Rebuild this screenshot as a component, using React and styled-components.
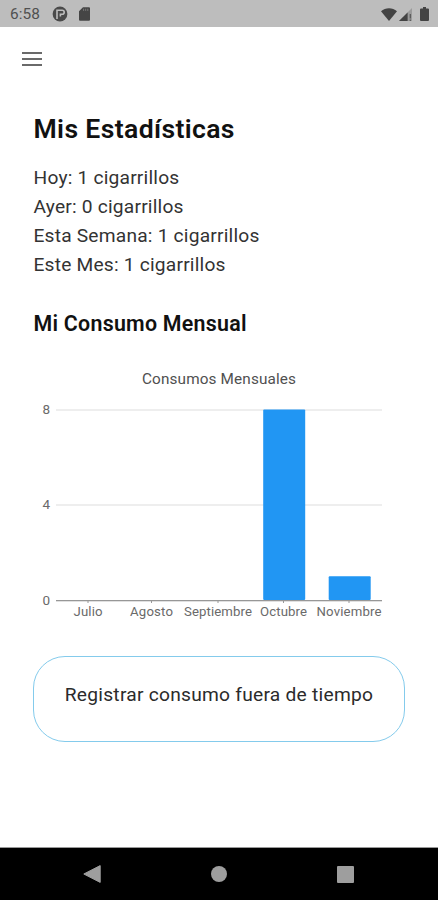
import React from 'react'
import styled, { createGlobalStyle } from 'styled-components'

const stats = [
  { label: 'Hoy', count: 1 },
  { label: 'Ayer', count: 0 },
  { label: 'Esta Semana', count: 1 },
  { label: 'Este Mes', count: 1 },
]

const months = [
  { name: 'Julio', value: 0, x: 88, width: 29 },
  { name: 'Agosto', value: 0, x: 151.5, width: 43 },
  { name: 'Septiembre', value: 0, x: 218, width: 68 },
  { name: 'Octubre', value: 8, x: 283.5, width: 47 },
  { name: 'Noviembre', value: 1, x: 349, width: 65 },
]

function StatusBar() {
  return (
    <Status>
      <Clock>6:58</Clock>
      <svg width="16" height="16" viewBox="0 0 16 16">
        <circle cx="8" cy="8" r="7.4" fill="#4a4a4a" />
        <path d="M5 13V4.200h5.200a2 2 0 0 1 0 4H8.400V10.500" fill="none" stroke="#bdbdbd" strokeWidth="1.600" />
      </svg>
      <SdCard width="11" height="14" viewBox="0 0 11 14">
        <path d="M4 0.3h6a1 1 0 0 1 1 1V12.7a1 1 0 0 1-1 1H1a1 1 0 0 1-1-1V4.3z" fill="#454545" />
        <path d="M4.6 1.7v2.2M6.7 1.7v2.2M8.8 1.7v2.2" stroke="#858585" strokeWidth=".8" />
      </SdCard>
      <SystemIcons>
        <svg width="16" height="13" viewBox="0 0 16 13">
          <path d="M8 13L0 3.2C4.4-.8 11.6-.8 16 3.2z" fill="#434343" />
        </svg>
        <svg width="13" height="13" viewBox="0 0 13 13">
          <path d="M13 0v13H0z" fill="#9b9b9b" />
          <path d="M8.6 4.4V13H0z" fill="#434343" />
          <path d="M11.3 6v4.5M11.3 11.5V13" stroke="#555" strokeWidth="1.2" />
        </svg>
        <Battery width="9" height="14" viewBox="0 0 9 14">
          <path d="M3 0h3v1.5h2a1 1 0 0 1 1 1V13a1 1 0 0 1-1 1H1a1 1 0 0 1-1-1V2.5a1 1 0 0 1 1-1h2z" fill="#434343" />
        </Battery>
      </SystemIcons>
    </Status>
  )
}

function Chart() {
  const base = 600
  const unit = 190.5 / 8
  return (
    <ChartSvg width="372" height="264" viewBox="34 360 372 264">
      <text x="219" y="384" textAnchor="middle" fontSize="15.3" fill="#505050" textLength="154">
        Consumos Mensuales
      </text>
      {[8, 4, 0].map(tick => (
        <g key={tick}>
          <text x="50" y={base - tick * unit + 4.5} textAnchor="end" fontSize="13.5" fill="#6a6a6a">{tick}</text>
          {tick > 0 && <rect x="56" y={Math.round(base - tick * unit) - 1} width="326" height="2" fill="#eeeeee" />}
        </g>
      ))}
      {months.map(m => (
        <g key={m.name}>
          {m.value > 0 && (
            <rect x={m.x - 20.3} y={base - m.value * unit} width="42" height={m.value * unit} rx="1" fill="#2196f3" />
          )}
          <rect x={m.x - 0.5} y="600" width="1" height="3" fill="#999" />
          <text x={m.x} y="615.5" textAnchor="middle" fontSize="13.2" fill="#6a6a6a" textLength={m.width}>
            {m.name}
          </text>
        </g>
      ))}
      <rect x="56" y="600" width="326" height="1.3" fill="#979797" />
    </ChartSvg>
  )
}

function App() {
  return (
    <Screen>
      <GlobalStyle />
      <StatusBar />
      <Header>
        <MenuButton aria-label="Menu">
          <span />
          <span />
          <span />
        </MenuButton>
      </Header>
      <Content>
        <Title>Mis Estadísticas</Title>
        <StatList>
          {stats.map(s => (
            <Stat key={s.label}>{s.label}: {s.count} cigarrillos</Stat>
          ))}
        </StatList>
        <Subtitle>Mi Consumo Mensual</Subtitle>
        <Chart />
        <RegisterButton>Registrar consumo fuera de tiempo</RegisterButton>
      </Content>
      <NavBar>
        <svg width="18" height="18" viewBox="0 0 18 18">
          <path d="M17.2 .6v16.8L.8 9z" fill="#9e9e9e" stroke="#9e9e9e" strokeLinejoin="round" />
        </svg>
        <HomeKey />
        <RecentKey />
      </NavBar>
    </Screen>
  )
}

const GlobalStyle = createGlobalStyle`
  * {
    box-sizing: border-box;
  }

  body {
    margin: 0;
    background: #fff;
    font-family: Roboto, sans-serif;
  }
`;

const Screen = styled.div`
  display: flex;
  flex-direction: column;
  width: 438px;
  height: 900px;
  background: #fff;
  overflow: hidden;
`;

const Status = styled.div`
  display: flex;
  align-items: center;
  height: 27px;
  padding: 1px 9px 0 10px;
  background: #bdbdbd;
`;

const Clock = styled.span`
  width: 42px;
  font-size: 15.4px;
  letter-spacing: .1px;
  color: #505050;
`;

const SdCard = styled.svg`
  margin-left: 11px;
`;

const SystemIcons = styled.div`
  display: flex;
  align-items: center;
  margin-left: auto;
  gap: 2px;
`;

const Battery = styled.svg`
  margin-left: 6px;
`;

const Header = styled.header`
  display: flex;
  align-items: center;
  height: 63px;
  padding-left: 22px;
`;

const MenuButton = styled.button`
  display: flex;
  flex-direction: column;
  gap: 4px;
  width: 20px;
  padding: 0;
  border: 0;
  background: none;

  & > span {
    height: 2px;
    background: #6a6a6a;
  }
`;

const Content = styled.main`
  display: flex;
  flex-direction: column;
  flex: 1;
  padding: 23px 33px 0;
`;

const Title = styled.h1`
  margin: 0 0 18px .5px;
  font-size: 26.6px;
  line-height: 32px;
  letter-spacing: .35px;
  font-weight: 600;
  color: #111;
`;

const StatList = styled.div`
  margin: 0 0 0 .5px;
`;

const Stat = styled.p`
  margin: 0;
  font-size: 19.2px;
  line-height: 29px;
  letter-spacing: .2px;
  color: #333;
`;

const Subtitle = styled.h2`
  margin: 32px 0 23px .5px;
  font-size: 21.4px;
  line-height: 26px;
  letter-spacing: .25px;
  font-weight: 600;
  color: #111;
`;

const ChartSvg = styled.svg`
  display: block;
  margin-left: 1px;
`;

const RegisterButton = styled.button`
  height: 86px;
  margin-top: 32px;
  padding: 0 0 9px;
  border: 1.5px solid #84cbec;
  border-radius: 32px;
  background: #fff;
  font-family: inherit;
  font-size: 19.2px;
  letter-spacing: .25px;
  color: #2b2b2b;
`;

const NavBar = styled.nav`
  display: flex;
  align-items: center;
  justify-content: space-between;
  height: 53px;
  padding: 0 84px 0 83px;
  border-top: 1px solid #999;
  background: #000;
`;

const HomeKey = styled.span`
  width: 16px;
  height: 16px;
  border-radius: 50%;
  background: #9e9e9e;
`;

const RecentKey = styled.span`
  width: 17px;
  height: 17px;
  border-radius: 1px;
  background: #9e9e9e;
`;

export default App;
